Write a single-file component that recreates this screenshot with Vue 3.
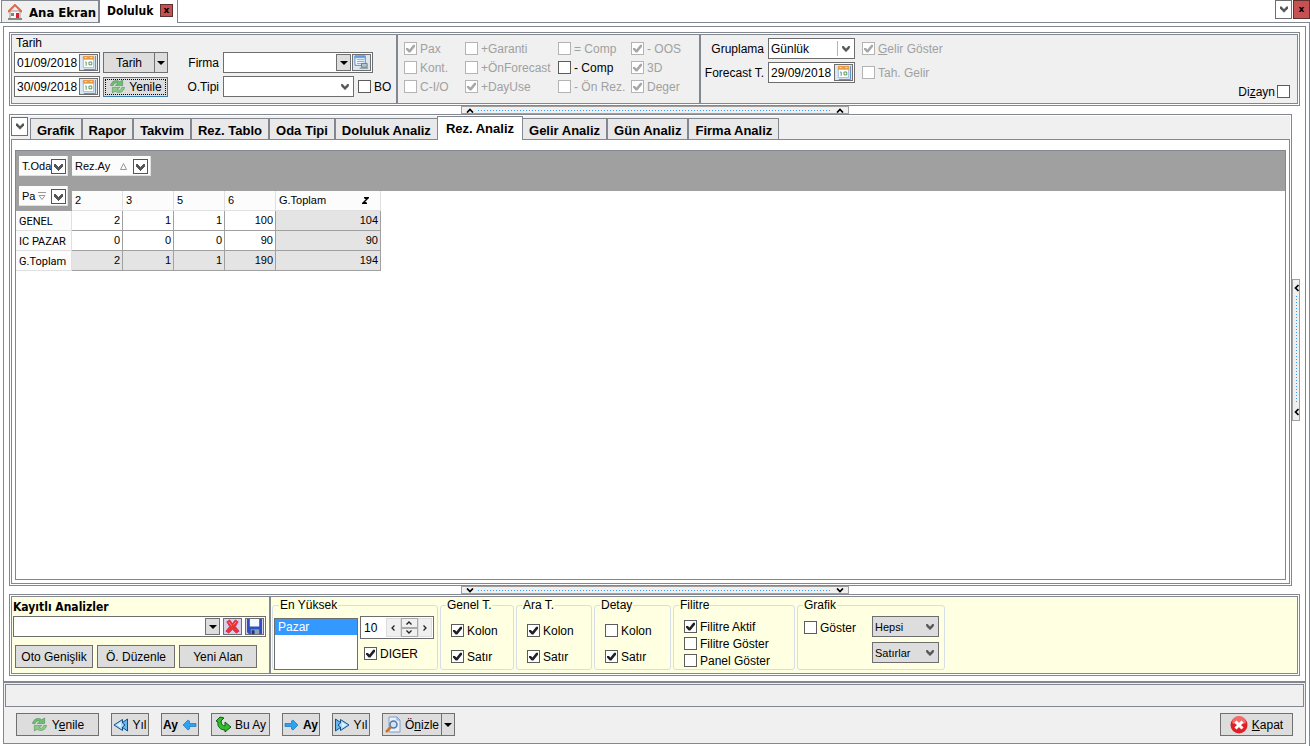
<script setup>
import { ref } from 'vue'

const tabs = ['Grafik', 'Rapor', 'Takvim', 'Rez. Tablo', 'Oda Tipi', 'Doluluk Analiz', 'Rez. Analiz', 'Gelir Analiz', 'Gün Analiz', 'Firma Analiz']
const activeTab = ref('Rez. Analiz')

const options = [
  { label: 'Pax', on: true, off: true },
  { label: '+Garanti', on: false, off: true },
  { label: '= Comp', on: false, off: true },
  { label: '- OOS', on: true, off: true },
  { label: 'Kont.', on: false, off: true },
  { label: '+ÖnForecast', on: false, off: true },
  { label: '- Comp', on: false, off: false },
  { label: '3D', on: true, off: true },
  { label: 'C-I/O', on: false, off: true },
  { label: '+DayUse', on: true, off: true },
  { label: '- Ön Rez.', on: false, off: true },
  { label: 'Deger', on: true, off: true }
]

const months = ['2', '3', '5', '6']
const rows = [
  { name: 'GENEL', values: [2, 1, 1, 100], total: 104 },
  { name: 'IC PAZAR', values: [0, 0, 0, 90], total: 90 },
  { name: 'G.Toplam', values: [2, 1, 1, 190], total: 194, sum: true }
]

const axisGroups = [
  { title: 'Genel T.', cls: 'g-total', kolon: true, satir: true },
  { title: 'Ara T.', cls: 'g-sub', kolon: true, satir: true },
  { title: 'Detay', cls: 'g-detail', kolon: false, satir: true }
]
</script>

<template>
  <svg class="sprite" aria-hidden="true">
    <symbol id="chev" viewBox="0 0 9 7"><path d="M0 0h2v1h1v1h1v1h1V2h1V1h1V0h2v3H8v1H7v1H6v1H5v1H4V6H3V5H2V4H1V3H0z" /></symbol>
    <symbol id="arrow" viewBox="0 0 8 4"><path d="M0 0h8L4 4z" /></symbol>
    <symbol id="up" viewBox="0 0 8 5"><path d="M1 4.5 4 1.5l3 3" fill="none" stroke="currentColor" stroke-width="1.7" /></symbol>
    <symbol id="calendar" viewBox="0 0 16 16">
      <path d="M0 0h16v16H0z" fill="#dbe9f7" />
      <path d="M2.5 2.5h11v11h-11z" fill="#fff" stroke="#9db8d6" />
      <path d="M2 1h12v4H2z" fill="#eb9a45" />
      <path d="M4 2h2v1H4zM10 2h2v1h-2z" fill="#fff" />
      <path d="M4.500 7.500h1v4M8.500 7.500h3v3h-3z" fill="none" stroke="#4b9350" />
      <path d="M15.500 1v14.500H3" fill="none" stroke="#5d87bd" />
    </symbol>
    <symbol id="refresh" viewBox="0 0 17 16">
      <path d="M1 7C2 2 7 0 11 3l3-2v6H6l3-2C7 3.500 5 4 4 7z" fill="#6fbd72" stroke="#378146" stroke-width=".5" />
      <path d="M16 9c-1 5-6 7-10 4l-3 2V9h8l-3 2c2 1.500 4 1 5-2z" fill="#8ccc86" stroke="#378146" stroke-width=".5" />
    </symbol>
    <symbol id="fast" viewBox="0 0 16 14">
      <path d="M6 7 14.500 1v12z" fill="#67b7ed" stroke="#174d86" />
      <path d="M1 7 9.500 1.500V5L12 7 9.500 9v3.500z" fill="#a9dcfb" stroke="#174d86" />
      <path d="m4 7 4-2.500v5z" fill="#e2f5ff" />
    </symbol>
    <symbol id="left" viewBox="0 0 15 14"><path d="m1 7 5-5 1.500 1v2.500H14v3H7.500V11L6 12z" fill="#2ea2f2" stroke="#1473c2" stroke-width=".7" /></symbol>
  </svg>

  <div class="page">
    <header class="window-tabs">
      <button class="wtab home">
        <svg width="14" height="17" viewBox="0 0 14 17"><path d="M2 7h10v8H2z" fill="#faf7ef" stroke="#999" /><path d="M0 8 7 1l7 7" fill="none" stroke="#e3674c" stroke-width="2" /><path d="M8 9h3v6H8z" fill="#d9232e" /><path d="M3 9h3v3H3z" fill="#748494" /><path d="M0 15h14" stroke="#888" stroke-width="2" /></svg>
        Ana Ekran
      </button>
      <div class="wtab current">Doluluk <button class="close" aria-label="Doluluk sekmesini kapat">x</button></div>
      <div class="window-buttons">
        <button class="listbtn" aria-label="Sekmeler"><svg width="8" height="7"><use href="#chev" /></svg></button>
        <button class="close big" aria-label="Pencereyi kapat">x</button>
      </div>
    </header>

    <div class="body">
      <main class="frame">
        <div class="work">
          <section class="double topbar">
            <div class="inner">
              <div class="dates">
                <label for="d1" class="caption">Tarih</label>
                <div class="field"><input id="d1" value="01/09/2018"><button class="cal" aria-label="Takvim"><svg width="15" height="15"><use href="#calendar" /></svg></button></div>
                <div class="split"><button class="btn">Tarih</button><button class="btn drop" aria-label="Tarih seçenekleri"><svg width="8" height="4"><use href="#arrow" /></svg></button></div>
                <label for="firma" class="right">Firma</label>
                <div class="field"><input id="firma"><button class="btn mini" aria-label="Firma listesi"><svg width="8" height="4"><use href="#arrow" /></svg></button><button class="cal lookup" aria-label="Firma ara"><svg width="15" height="15" viewBox="0 0 16 16"><path d="M1 1h11v10H1z" fill="#fff" stroke="#4584ce" /><path d="M1 1h11v2H1zM3 5h8M3 7h8M3 9h8" fill="#4e91db" stroke="#74a6dd" /><path d="M8 9h6v4H8zM6 14h9" fill="#b5c6cb" stroke="#647e89" /></svg></button></div>
                <div class="field"><input aria-label="Bitiş tarihi" value="30/09/2018"><button class="cal" aria-label="Takvim"><svg width="15" height="15"><use href="#calendar" /></svg></button></div>
                <button class="btn focus"><svg width="17" height="15"><use href="#refresh" /></svg>Yenile</button>
                <label for="otipi" class="right">O.Tipi</label>
                <div class="tipi">
                  <div class="select"><select id="otipi"><option></option></select><svg width="8" height="6"><use href="#chev" /></svg></div>
                  <label class="check"><input type="checkbox">BO</label>
                </div>
              </div>
              <div class="options">
                <label v-for="o in options" :key="o.label" class="check"><input type="checkbox" :checked="o.on" :disabled="o.off">{{ o.label }}</label>
              </div>
              <div class="forecast">
                <label for="grup" class="right">Gruplama</label>
                <div class="select ruled"><select id="grup"><option>Günlük</option></select><svg width="8" height="6"><use href="#chev" /></svg></div>
                <label class="check"><input type="checkbox" checked disabled><span><u>G</u>elir Göster</span></label>
                <label for="fore" class="right">Forecast T.</label>
                <div class="field"><input id="fore" value="29/09/2018"><button class="cal" aria-label="Takvim"><svg width="15" height="15"><use href="#calendar" /></svg></button></div>
                <label class="check"><input type="checkbox" disabled>Tah. Gelir</label>
              </div>
              <label class="check design"><span>Di<u>z</u>ayn</span><input type="checkbox"></label>
            </div>
          </section>

          <div class="splitter"><svg width="8" height="5"><use href="#up" /></svg><i></i><svg width="8" height="5"><use href="#up" /></svg></div>

          <div class="middle">
            <section class="double analysis">
              <div class="inner col">
                <nav class="tabs">
                  <button class="listbtn" aria-label="Sekme listesi"><svg width="8" height="7"><use href="#chev" /></svg></button>
                  <button v-for="t in tabs" :key="t" class="tab" :class="{ active: t === activeTab }" @click="activeTab = t">{{ t }}</button>
                </nav>
                <div class="tabpage">
                  <div class="pivot">
                    <div class="band">
                      <div class="chip">T.Oda<button aria-label="T.Oda filtresi"><svg width="9" height="7"><use href="#chev" /></svg></button></div>
                      <div class="chip wide">Rez.Ay<svg class="sort" width="7" height="7" viewBox="0 0 7 7"><path d="M.5 6.5h6l-3-6z" /></svg><button aria-label="Rez.Ay filtresi"><svg width="9" height="7"><use href="#chev" /></svg></button></div>
                    </div>
                    <table>
                      <thead>
                        <tr>
                          <th class="corner"><div class="chip">Pa<svg class="sort" width="8" height="8" viewBox="0 0 8 8"><path d="M0 .5h8M1 3.5h6l-3 4z" /></svg><button aria-label="Pazar filtresi"><svg width="9" height="7"><use href="#chev" /></svg></button></div></th>
                          <th v-for="m in months" :key="m" scope="col">{{ m }}</th>
                          <th scope="col" class="grand"><div>G.Toplam<svg width="7" height="7" viewBox="0 0 7 7"><path d="M2 0h5v1L5 3H4L2 1zM0 6l2-2h1l2 2v1H0zM4 2h1v1L3 5H2V4z" /></svg></div></th>
                        </tr>
                      </thead>
                      <tbody>
                        <tr v-for="r in rows" :key="r.name" :class="{ sum: r.sum }">
                          <th scope="row">{{ r.name }}</th>
                          <td v-for="(v, i) in r.values" :key="i">{{ v }}</td>
                          <td class="total">{{ r.total }}</td>
                        </tr>
                      </tbody>
                    </table>
                  </div>
                </div>
              </div>
            </section>
            <div class="splitter side"><svg width="5" height="8" viewBox="0 0 5 8"><path d="M4.500 1 1.500 4l3 3" /></svg><i></i><svg width="5" height="8" viewBox="0 0 5 8"><path d="M4.500 1 1.500 4l3 3" /></svg></div>
          </div>

          <div class="splitter down"><svg width="8" height="5"><use href="#up" /></svg><i></i><svg width="8" height="5"><use href="#up" /></svg></div>

          <section class="double saved">
            <div class="inner">
              <div class="stored">
                <label for="kayit" class="title">Kayıtlı Analizler</label>
                <div class="field"><input id="kayit"><button class="btn mini" aria-label="Analiz listesi"><svg width="8" height="4"><use href="#arrow" /></svg></button>
                  <button class="cal del" aria-label="Sil"><svg width="15" height="15" viewBox="0 0 16 16"><path d="m2 3 3-2 3 4 3-4 3 2-3 5 4 5-3 2-4-4-4 4-3-2 4-5z" fill="#e8352c" stroke="#d8286a" /><path d="m4 3 3 4M12 3 9 6" stroke="#ff9a80" /></svg></button>
                  <button class="cal disk" aria-label="Kaydet"><svg width="15" height="15" viewBox="0 0 16 16"><path d="M0 0h16v16H2l-2-2z" fill="#2d4fc0" /><path d="M3 0h10v8H3z" fill="#f4f7ff" /><path d="M4 11h9v5H4z" fill="#8aa4bd" /><path d="M5 12h3v4H5z" fill="#1c357f" /></svg></button></div>
                <div class="actions"><button class="btn">Oto Genişlik</button><button class="btn">Ö. Düzenle</button><button class="btn">Yeni Alan</button></div>
              </div>
              <div class="groups">
                <fieldset class="g-top">
                  <legend>En Yüksek</legend>
                  <select size="3" class="list" aria-label="En Yüksek alanı"><option class="picked">Pazar</option></select>
                  <div class="topcount">
                    <div class="spin"><input aria-label="Adet" value="10"><button aria-label="Sol"><svg width="4" height="6" viewBox="0 0 4 6"><path d="M3.500.5 1 3l2.500 2.500" /></svg></button><span><button aria-label="Artır"><svg width="6" height="4" viewBox="0 0 6 4"><path d="M.5 3.500 3 1l2.500 2.500" /></svg></button><button aria-label="Azalt"><svg width="6" height="4" viewBox="0 0 6 4"><path d="M.5.5 3 3 5.500.5" /></svg></button></span><button aria-label="Sağ"><svg width="4" height="6" viewBox="0 0 4 6"><path d="M.5.5 3 3 .5 5.500" /></svg></button></div>
                    <label class="check"><input type="checkbox" checked>DIGER</label>
                  </div>
                </fieldset>
                <fieldset v-for="g in axisGroups" :key="g.title" class="axis" :class="g.cls">
                  <legend>{{ g.title }}</legend>
                  <label class="check"><input type="checkbox" :checked="g.kolon">Kolon</label>
                  <label class="check"><input type="checkbox" :checked="g.satir">Satır</label>
                </fieldset>
                <fieldset class="g-filter">
                  <legend>Filitre</legend>
                  <label class="check"><input type="checkbox" checked>Filitre Aktif</label>
                  <label class="check"><input type="checkbox">Filitre Göster</label>
                  <label class="check"><input type="checkbox">Panel Göster</label>
                </fieldset>
                <fieldset class="g-chart">
                  <legend>Grafik</legend>
                  <label class="check"><input type="checkbox">Göster</label>
                  <div class="selects">
                    <div class="select grey"><select aria-label="Grafik kapsamı"><option>Hepsi</option></select><svg width="8" height="6"><use href="#chev" /></svg></div>
                    <div class="select grey"><select aria-label="Grafik yönü"><option>Satırlar</option></select><svg width="8" height="6"><use href="#chev" /></svg></div>
                  </div>
                </fieldset>
              </div>
            </div>
          </section>
        </div>

        <footer>
          <div class="status"></div>
          <div class="toolbar">
            <button class="btn w-l"><svg width="17" height="15"><use href="#refresh" /></svg><span>Y<u>e</u>nile</span></button>
            <button class="btn w-s"><svg width="16" height="14"><use href="#fast" /></svg>Yıl</button>
            <button class="btn w-s strong">Ay<svg width="15" height="14"><use href="#left" /></svg></button>
            <button class="btn w-m"><svg width="17" height="17" viewBox="0 0 17 17"><path d="m1 5 4-4 4 1-3 3c0 3 2 5 4 5V6l6 5-6 5v-2c-5 0-8-4-7-8z" fill="#2fbd2b" stroke="#125b16" /></svg>Bu Ay</button>
            <button class="btn w-s strong"><svg class="flip" width="15" height="14"><use href="#left" /></svg>Ay</button>
            <button class="btn w-s"><svg class="flip" width="16" height="14"><use href="#fast" /></svg>Yıl</button>
            <div class="split preview"><button class="btn"><svg width="16" height="17" viewBox="0 0 16 17"><path d="M4 1h8l3 3v12H4z" fill="#e8f1fd" stroke="#7c9fcd" /><path d="M12 1v3h3" fill="none" stroke="#7c9fcd" /><circle cx="8.500" cy="8.500" r="3.500" fill="#cfe3f7" stroke="#5378a8" stroke-width="1.500" /><path d="m6 11-5 5" stroke="#c9742c" stroke-width="2.500" /></svg><span>Ö<u>n</u>izle</span></button><button class="btn drop" aria-label="Önizle seçenekleri"><svg width="8" height="4"><use href="#arrow" /></svg></button></div>
            <button class="btn exit"><svg width="18" height="18" viewBox="0 0 18 18"><circle cx="9" cy="9" r="8.500" fill="#df1f26" /><path d="M2 7a7 7 0 0 1 14 0c-4 2-10 2-14 0" fill="#f26b68" /><path d="m5.500 5.500 7 7M12.500 5.500l-7 7" stroke="#fff" stroke-width="3" /></svg><span><u>K</u>apat</span></button>
          </div>
        </footer>
      </main>
    </div>
  </div>
</template>

<style>
body { margin: 0; background: #fff; }
</style>

<style scoped>
* { box-sizing: border-box; }
.page {
  --line: #828790;
  --dark: #6e6e6e;
  min-height: 100vh;
  display: flex;
  flex-direction: column;
  font: 12px/14px "Liberation Sans", Arial, sans-serif;
  color: #000;
}
.sprite { position: absolute; width: 0; height: 0; }
button, input, select { font: inherit; color: inherit; margin: 0; padding: 0; border: 0; border-radius: 0; outline: 0; min-width: 0; }
svg { flex: none; display: block; }

.window-tabs { display: flex; height: 23px; align-items: flex-end; border-bottom: 1px solid var(--line); padding-left: 1px; }
.wtab { font: bold 12px/16px "DejaVu Sans Condensed", "Noto Sans", sans-serif; display: flex; align-items: center; border: 1px solid var(--line); }
.home { font-size: 13px; background: #f0f0f0; height: 22px; padding: 2px 4px 0 6px; gap: 7px; border-bottom: 0; width: 98px; white-space: nowrap; }
.current { background: #fff; height: 23px; width: 79px; padding: 0 4px 2px 7px; justify-content: space-between; border-width: 0 1px; margin-bottom: -1px; }
.close { width: 13px; height: 13px; background: #c75050; border: 1px solid #5e3030; font: bold 9px/9px "DejaVu Sans", sans-serif; }
.window-buttons { margin-left: auto; display: flex; gap: 1px; align-self: flex-start; }
.big { width: 17px; height: 19px; }
.listbtn { width: 17px; height: 19px; border: 1px solid var(--dark); background: #fff; display: grid; place-items: center; color: #555; fill: #555; }

.body { flex: 1; display: flex; border-right: 1px solid var(--line); padding: 3px 3px 2px; }
.frame { flex: 1; min-width: 0; display: flex; flex-direction: column; border: 1px solid var(--line); }
.work { flex: 1; display: flex; flex-direction: column; padding: 5px; }
.double { border: 1px solid var(--line); padding: 1px; }
.inner { border: 1px solid var(--line); height: 100%; display: flex; }
.col { flex-direction: column; }

.topbar { height: 74px; }
.topbar .inner { background: #f0f0f0; }
.dates { display: grid; grid-template-columns: 86px 65px 49px 150px; grid-template-rows: 14px 21px 21px; column-gap: 3px; row-gap: 3px; padding: 0 23px 0 2px; border-right: 2px solid var(--line); align-items: center; }
.caption { grid-column: 1 / -1; padding: 1px 0 0 2px; }
.right { text-align: right; padding-right: 1px; white-space: nowrap; }
.field { display: flex; align-items: center; height: 21px; border: 1px solid var(--dark); background: #fff; padding: 1px; gap: 1px; }
.field input { flex: 1; width: 0; padding-left: 1px; background: transparent; }
.cal { width: 19px; height: 17px; border: 1px solid var(--dark); background: #dde7ef; display: grid; place-items: center; flex: none; }
.btn { display: flex; align-items: center; justify-content: center; gap: 4px; background: #ddd; border: 1px solid #707070; white-space: nowrap; }
.mini { width: 15px; height: 17px; flex: none; }
.split { display: flex; align-self: stretch; }
.split .btn:first-child { flex: 1; }
.drop { width: 14px; margin-left: -1px; flex: none; }
.focus { height: 20px; border-color: #3c7fb1; outline: 1px dotted #000; outline-offset: -3px; gap: 3px; }
.tipi { display: flex; align-items: center; gap: 4px; white-space: nowrap; }
.tipi .select { width: 131px; }
.select { position: relative; height: 21px; border: 1px solid var(--dark); background: #fff; flex: none; }
.select select { appearance: none; width: 100%; height: 100%; background: transparent; padding: 0 16px 0 2px; }
.select svg { position: absolute; right: 4px; top: 7px; fill: #555; pointer-events: none; }
.ruled::after { content: ""; position: absolute; right: 16px; top: 2px; bottom: 2px; border-left: 1px solid #b4b4b4; }

.check { display: flex; align-items: center; gap: 3px; white-space: nowrap; height: 13px; }
.check input { appearance: none; width: 13px; height: 13px; flex: none; border: 1px solid #5c5c5c; background: #fff; }
.check input:checked::before { content: ""; display: block; width: 9px; height: 9px; margin: 1px; background: #222; clip-path: polygon(0 45%, 22% 45%, 38% 62%, 80% 8%, 100% 8%, 100% 30%, 48% 95%, 30% 95%, 0 62%); }
.check:has(input:disabled) { color: #a0a0a0; }
.check input:disabled { border-color: #b4b4b4; }
.check input:disabled:checked::before { background: #a8a8a8; }
.options { display: grid; grid-template-columns: 61px 93px 73px 68px; grid-auto-rows: 13px; row-gap: 6px; padding: 7px 0 0 6px; border-right: 2px solid var(--line); }
.forecast { display: grid; grid-template-columns: 64px 87px auto; grid-auto-rows: 21px; gap: 3px; padding: 3px 0 0 0; align-content: start; align-items: center; }
.forecast .check { padding-left: 4px; }
.design { margin: auto 7px 5px auto; gap: 2px; }

.splitter { display: flex; align-items: center; justify-content: space-between; align-self: center; width: 388px; height: 8px; border: 1px solid #a0a0a0; background: #f0f0f0; padding: 0 4px; gap: 4px; flex: none; }
.splitter i { flex: 1; height: 1px; background: repeating-linear-gradient(90deg, #3399ff 0 1px, transparent 1px 3px); }
.splitter path { fill: none; stroke: #000; stroke-width: 1.7; }
.down svg { transform: rotate(180deg); }
.middle { flex: 1; display: flex; }
.analysis { flex: 1; min-width: 0; }
.side { flex-direction: column; width: 8px; height: 142px; padding: 4px 0; }
.side i { width: 1px; background: repeating-linear-gradient(180deg, #3399ff 0 1px, transparent 1px 3px); }

.analysis .inner { border-top: 0; border-left: 0; border-right: 0; }
.tabs { display: flex; align-items: flex-end; height: 23px; background: #f0f0f0; }
.tabs .listbtn { margin: 0 2px 3px 0; height: 19px; }
.tab { height: 21px; border: 1px solid var(--line); border-bottom: 0; background: #e9e9e9; font: bold 13px/15px "Liberation Sans", Arial, sans-serif; padding: 2px 6px 0; white-space: nowrap; margin-right: -1px; flex: none; }
.tab + .tab { border-left-width: 2px; }
.active { background: #fff; height: 24px; margin-bottom: -1px; padding: 0 8px 1px; }
.tab.active, .tab.active + .tab { border-left-width: 1px; }
.tabpage { flex: 1; border: 1px solid var(--line); border-bottom: 0; padding: 10px 3px 3px; display: flex; }
.active { position: relative; z-index: 1; }
.pivot { flex: 1; border: 1px solid var(--line); font-size: 11px; line-height: 13px; }
.band { height: 40px; background: #a0a0a0; display: flex; gap: 4px; padding: 5px 3px; }
.chip { display: flex; align-items: center; width: 49px; height: 20px; background: #fcfcfc; border: solid #e0e0e0; border-width: 0 1px 1px 0; padding: 1px 1px 0 3px; font-weight: normal; }
.chip.wide { width: 79px; padding-right: 2px; }
.chip button { width: 15px; height: 15px; margin-left: auto; flex: none; background: #fff; border: 1px solid #555; display: grid; place-items: center; padding-top: 3px; fill: #555; }
.sort { margin-left: 10px; fill: none; stroke: #999; }
.corner .sort { margin-left: 3px; }
table { border-collapse: separate; border-spacing: 0; table-layout: fixed; width: 365px; }
th, td { width: 51px; height: 20px; padding: 0 2px; font-weight: normal; }
thead th { text-align: left; background: #fcfcfc; border: solid #e0e0e0; border-width: 0 1px 1px 0; padding-left: 3px; }
thead .corner { background: #a0a0a0; border: 0; width: 56px; padding: 0; }
.corner .chip { margin: -10px 0 0 3px; }
.grand { width: 105px; }
.grand div { display: flex; align-items: center; justify-content: space-between; padding-right: 9px; }
tbody th { text-align: left; background: #fcfcfc; border: solid #e0e0e0; border-width: 0 1px 1px 0; padding: 1px 2px 0 3px; font-family: Roboto, sans-serif; }
td { text-align: right; border: solid #a0a0a0; border-width: 0 1px 1px 0; }
.total, .sum td { background: #e4e4e4; }

.saved { height: 82px; }
.saved .inner { background: #ffffe1; }
.stored { width: 259px; border-right: 2px solid var(--line); padding: 2px 3px 0 1px; }
.title { display: block; font: bold 12px/16px "DejaVu Sans Condensed", "Noto Sans", sans-serif; }
.stored .field { margin-top: 1px; gap: 3px; }
.disk, .del { background: #d8d0e4; }
.actions { display: flex; gap: 4px; padding: 8px 0 0 2px; }
.actions .btn { width: 78px; height: 23px; }
.groups { display: flex; gap: 2px; padding: 1px 1px 3px; }
fieldset { margin: 0; min-width: 0; border: 1px solid #d5dfe5; border-radius: 3px; padding: 0 0 0 10px; }
legend { padding: 0 1px; margin-left: -5px; line-height: 14px; }
.g-top { width: 166px; display: flex; gap: 2px; padding: 0; padding-left: 1px; }
.g-top legend { margin-left: 5px; }
.list { width: 84px; height: 52px; margin-top: 6px; border: 1px solid var(--dark); background: #fff; overflow: hidden; flex: none; }
.list option { padding: 1px 3px; min-height: 16px; }
.picked { background: #3399ff; color: #fff; }
.topcount { padding-top: 4px; }
.topcount .check { padding: 0 0 0 4px; margin-top: 8px; }
.spin { width: 74px; height: 23px; border: 1px solid var(--dark); background: #fff; display: flex; padding: 1px; }
.spin > input { width: 24px; padding-left: 2px; }
.spin button { flex: 1; background: #f0f0f0; border: 1px solid #ddd; display: grid; place-items: center; }
.spin span { width: 17px; display: flex; flex-direction: column; }
.spin span button { border: 1px solid #aaa; }
.spin path { fill: none; stroke: #222; stroke-width: 1.3; }
.axis .check { margin-top: 12px; }
.axis .check + .check { margin-top: 13px; }
.g-total { width: 74px; }
.g-sub { width: 76px; }
.g-detail { width: 77px; }
.g-filter { width: 122px; }
.g-filter .check { margin-top: 4px; }
.g-filter legend + .check { margin-top: 8px; }
.g-chart { width: 148px; padding-left: 6px; padding-right: 5px; display: flex; justify-content: space-between; }
.g-chart legend { margin-left: -1px; }
.g-chart .check { margin-top: 9px; }
.selects { display: flex; flex-direction: column; gap: 5px; padding-top: 4px; font-size: 11px; }
.grey { width: 67px; background: #ddd; }

footer { border-top: 2px solid var(--line); background: #f0f0f0; padding: 1px 1px 7px; }
.status { height: 23px; border: 1px solid var(--line); }
.toolbar { display: flex; gap: 12px; padding: 6px 11px 0 11px; }
.toolbar > * { height: 23px; }
.w-l { width: 83px; }
.w-s { width: 38px; gap: 3px; }
.w-m { width: 59px; gap: 3px; }
.preview { width: 73px; }
.strong { font-weight: bold; gap: 4px; }
.flip { transform: scaleX(-1); }
.exit { width: 73px; margin-left: auto; }
</style>
